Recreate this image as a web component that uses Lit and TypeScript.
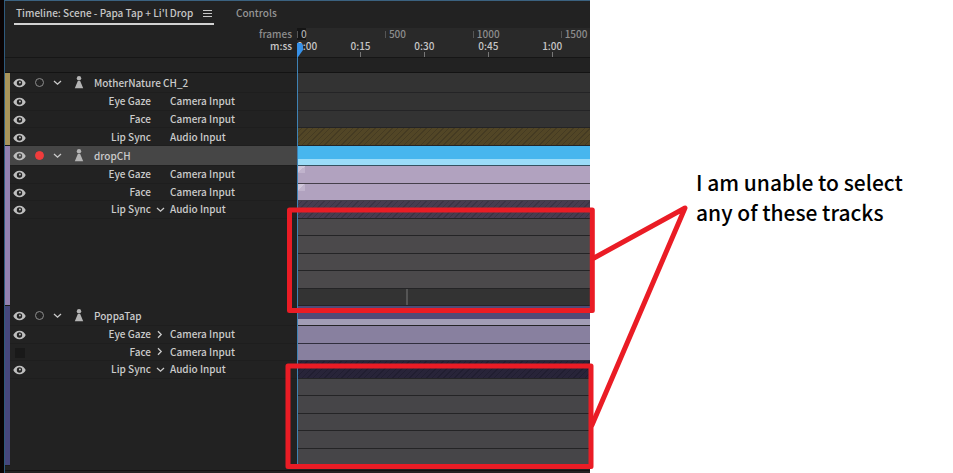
import { LitElement, html, svg, css } from "lit";
import { customElement } from "lit/decorators.js";
import { classMap } from "lit/directives/class-map.js";

type Sub = { label: string; source: string; fold?: "open" | "closed"; hidden?: boolean; lane: string };
type Group = { name: string; tone: string; armed?: boolean; lane: string; subs: Sub[]; extra: string[] };

const groups: Group[] = [
  {
    name: "MotherNature CH_2", tone: "gold", lane: "empty",
    subs: [
      { label: "Eye Gaze", source: "Camera Input", lane: "empty" },
      { label: "Face", source: "Camera Input", lane: "empty" },
      { label: "Lip Sync", source: "Audio Input", lane: "hatch-gold" },
    ],
    extra: [],
  },
  {
    name: "dropCH", tone: "pink", armed: true, lane: "scene-blue",
    subs: [
      { label: "Eye Gaze", source: "Camera Input", lane: "take-pink" },
      { label: "Face", source: "Camera Input", lane: "take-pink" },
      { label: "Lip Sync", source: "Audio Input", fold: "open", lane: "hatch-pink" },
    ],
    extra: ["viseme-warm", "viseme-warm", "viseme-warm", "viseme-warm", "empty mark"],
  },
  {
    name: "PoppaTap", tone: "indigo", lane: "scene-indigo",
    subs: [
      { label: "Eye Gaze", source: "Camera Input", fold: "closed", lane: "take-indigo" },
      { label: "Face", source: "Camera Input", fold: "closed", hidden: true, lane: "take-indigo" },
      { label: "Lip Sync", source: "Audio Input", fold: "open", lane: "hatch-indigo" },
    ],
    extra: ["viseme", "viseme", "viseme", "viseme", "viseme"],
  },
];

const eye = html`<svg width="13" height="10" viewBox="0 0 13 10">
  ${svg`<path fill="currentColor" fill-rule="evenodd" d="M6.500 .7C3.500 .7 1.300 2.700 .3 5c1 2.300 3.200 4.300 6.200 4.300S11.700 7.300 12.700 5C11.700 2.700 9.500 .7 6.500 .7ZM6.500 2.300a2.700 2.700 0 1 1 0 5.400a2.700 2.700 0 0 1 0-5.400Z"/>
  <circle cx="6.900" cy="4.600" r="1" fill="currentColor"/>`}
</svg>`;
const down = html`<svg width="9" height="9" viewBox="0 0 9 9"><path d="M1 3l3.500 3.200L8 3" fill="none" stroke="currentColor" stroke-width="1.300"/></svg>`;
const right = html`<svg width="9" height="9" viewBox="0 0 9 9"><path d="M2 1.200L5.200 4.500L2 7.800" fill="none" stroke="currentColor" stroke-width="1.300"/></svg>`;
const puppet = html`<svg width="10" height="13" viewBox="0 0 10 13"><circle cx="5" cy="2.300" r="2.200" fill="currentColor"/><path d="M3.800 5h2.400L9.200 12.300H.8Z" fill="currentColor"/></svg>`;

@customElement("app-root")
export class AppRoot extends LitElement {
  static styles = css`
    :host {
      display: grid;
      grid-template-columns: 590fr 363fr;
      position: relative;
      min-height: 100vh;
      background: #fff;
      overflow: hidden;
      font-family: "Noto Sans CJK SC", "Noto Sans", sans-serif;
      font-size: 10px;
      font-weight: 500;
      line-height: 16px;
      color: #c6c6c6;
    }
    * { box-sizing: border-box; }
    button {
      display: flex;
      align-items: center;
      justify-content: center;
      padding: 0;
      border: 0;
      background: none;
      color: inherit;
      font: inherit;
    }
    svg { display: block; }
    .panel {
      min-width: 0;
      border-left: 4px solid #090304;
      background: #222;
    }
    .body {
      position: relative;
      min-height: 100%;
      border-top: 1px solid #3b6280;
      border-left: 1px solid #2f5a7c;
    }
    .tabs { display: flex; height: 27px; padding-left: 9px; gap: 20px; align-items: flex-start; }
    .tab { height: 24px; padding: 2px 2px 0; color: #969696; white-space: nowrap; }
    .tab.on { width: 200px; justify-content: space-between; border-bottom: 2px solid #d2d2d2; color: #c6c6c6; }
    .tab:not(.on) { padding-bottom: 2px; }
    .split { display: grid; grid-template-columns: 292px 1fr; }
    .ruler { height: 30px; border-bottom: 1px solid #161616; }
    .units { text-align: right; padding-right: 5px; line-height: 12px; }
    .units p, .note p { margin: 0; }
    .units .dim { color: #8d8d8d; }
    .scale { background: #292929; line-height: 12px; }
    .frames { display: flex; color: #8d8d8d; height: 12px; }
    .frames span { flex: 0 0 30%; display: flex; align-items: center; gap: 3px; }
    .frames span:last-child { flex-basis: 10%; }
    .frames span::before { content: ""; width: 1px; height: 7px; background: #555; }
    .frames span:first-child { background: linear-gradient(#151515, #151515) 0 0 / 9px 100% no-repeat; color: #aaa; }
    .times { display: grid; grid-template-columns: 11% repeat(4, 1fr); padding-right: 2%; height: 17px; }
    .times span { display: flex; flex-direction: column; align-items: center; }
    .times span:first-child { align-items: flex-start; }
    .times span::after { content: ""; width: 1px; height: 5px; background: #777; }
    .times span:first-child::after { background: none; }
    .spacer { height: 15px; border-bottom: 1px solid #131313; }
    .group { display: grid; grid-template-columns: 5px 287px 1fr; grid-template-rows: 20px; grid-auto-rows: 1fr; min-height: 160px; }
    .group.gold { min-height: 73px; }
    .stripe { grid-column: 1; grid-row: 1 / span 9; border-bottom: 1px solid #1a1a1a; }
    .gold .stripe { grid-row: 1 / span 4; background: #a8935a; }
    .pink .stripe { background: #9480b0; }
    .indigo .stripe { background: #46467c; }
    .head, .sub { grid-column: 2; display: flex; align-items: center; color: #cbcbcb; border-bottom: 1px solid #1e1e1e; line-height: 14px; }
    .head.armed { background: #464646; }
    .blank { grid-column: 2; }
    .eye { flex: 0 0 19px; height: 14px; color: #bfbfbf; }
    .sub .eye { padding-top: 2px; }
    .off { width: 10px; height: 10px; background: #191919; }
    .rec { flex: 0 0 20px; height: 14px; }
    .dot { width: 9px; height: 9px; border: 1px solid #8d8d8d; border-radius: 50%; }
    .armed .dot { border-color: #f03c3c; background: #f03c3c; }
    .fold { flex: 0 0 16px; height: 14px; }
    .puppet { flex: 0 0 27px; display: flex; justify-content: center; color: #b4b4b4; }
    .name { padding-left: 2px; }
    .label { flex: 0 0 122px; text-align: right; }
    .sub .fold { flex-basis: 19px; }
    .lane { grid-column: 3; border-bottom: 1px solid #242426; min-height: 17px; }
    .empty { background: #333; }
    .mark { background: linear-gradient(#555, #555) 37.5% 0 / 2px 100% no-repeat #333; }
    .scene-blue { background: linear-gradient(#47b6ee 0 13px, #9bdcf8 13px); border-bottom-color: #35505f; }
    .scene-indigo { background: linear-gradient(#504a78 0 13px, #a29db5 13px); }
    .take-pink {
      background: linear-gradient(135deg, #cfc5d9 50%, #c0b3cc 50%) 1px 0 / 7px 7px no-repeat #b1a2bf;
      border-bottom-color: #453f4a;
    }
    .take-indigo { background: #88809f; border-bottom-color: #302e3d; }
    .hatch-gold { background: repeating-linear-gradient(135deg, #524626 0 3px, #453b22 3px 4px); }
    .hatch-pink { background: repeating-linear-gradient(135deg, #473d50 0 3px, #3c3445 3px 4px); }
    .hatch-indigo { background: repeating-linear-gradient(135deg, #282439 0 3px, #211e31 3px 4px); }
    .viseme-warm { background: #4b494b; }
    .viseme { background: #464548; }
    .end { height: 5px; border-bottom: 1px solid #121212; }
    .playhead { position: absolute; top: 42px; left: 292px; width: 6px; height: 422px; }
    .playhead::before { content: ""; display: block; width: 6px; height: 14px; background: #3791e8; clip-path: polygon(0 0, 80% 0, 100% 20%, 100% 50%, 17% 100%, 0 100%); }
    .playhead::after { content: ""; display: block; width: 1px; height: 408px; background: #3f82b4; }
    .note {
      min-width: 0;
      padding: 167px 0 0 106px;
      font-size: 21px;
      line-height: 30px;
      color: #000;
    }
    .callout { position: absolute; inset: 0 auto auto 0; width: 100%; height: 473px; pointer-events: none; }
  `;

  private fold(state: "open" | "closed" | undefined, label: string) {
    return state
      ? html`<button class="fold" aria-label="Toggle ${label}">${state === "open" ? down : right}</button>`
      : html`<span class="fold"></span>`;
  }

  private group(g: Group) {
    return html`<section class="group ${g.tone}">
      <div class="stripe"></div>
      <div class=${classMap({ head: true, armed: !!g.armed })}>
        <button class="eye" aria-label="Show ${g.name}">${eye}</button>
        <button class="rec" aria-label="Arm ${g.name}"><span class="dot"></span></button>
        ${this.fold("open", g.name)}
        <span class="puppet">${puppet}</span>
        <span class="name">${g.name}</span>
      </div>
      <div class="lane ${g.lane}"></div>
      ${g.subs.map((s) => html`
        <div class="sub">
          <button class="eye" aria-label="Show ${s.label}">${s.hidden ? html`<span class="off"></span>` : eye}</button>
          <span class="label">${s.label}</span>
          ${this.fold(s.fold, s.label)}
          <span>${s.source}</span>
        </div>
        <div class="lane ${s.lane}"></div>`)}
      ${g.extra.map((lane) => html`<div class="blank"></div><div class="lane ${lane}"></div>`)}
    </section>`;
  }

  render() {
    return html`
      <main class="panel">
        <div class="body">
          <nav class="tabs">
            <button class="tab on">Timeline: Scene - Papa Tap + Li'l Drop
              <svg width="9" height="9" viewBox="0 0 9 9"><path d="M0 1.500h9M0 4.500h9M0 7.500h9" stroke="currentColor"/></svg>
            </button>
            <button class="tab">Controls</button>
          </nav>
          <div class="split ruler">
            <div class="units"><p class="dim">frames</p><p>m:ss</p></div>
            <div class="scale">
              <div class="frames">${["0", "500", "1000", "1500"].map((f) => html`<span>${f}</span>`)}</div>
              <div class="times">${["0:00", "0:15", "0:30", "0:45", "1:00"].map((t) => html`<span>${t}</span>`)}</div>
            </div>
          </div>
          <div class="spacer"></div>
          ${groups.map((g) => this.group(g))}
          <div class="end"></div>
          <div class="playhead"></div>
        </div>
      </main>
      <aside class="note"><p>I am unable to select<br />any of these tracks</p></aside>
      <svg class="callout" viewBox="0 0 953 473" preserveAspectRatio="none" fill="none" stroke="#ea1c25" stroke-width="5" stroke-linejoin="round" stroke-linecap="round">
        <path d="M289.500 210H592.300V310.500H289.500Z" />
        <path d="M288 366H591V466.500H288Z" />
        <path d="M594 258L685 208L592 425" />
      </svg>`;
  }
}
